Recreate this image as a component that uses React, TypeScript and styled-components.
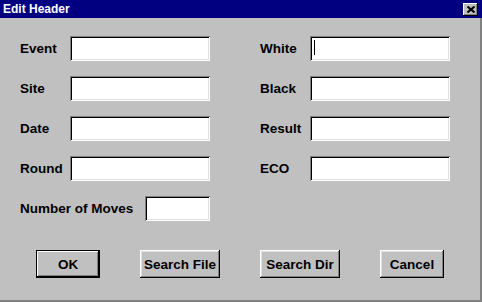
import React from "react";
import styled, { createGlobalStyle } from "styled-components";

const GlobalStyle = createGlobalStyle`
  html, body {
    margin: 0;
    padding: 0;
    background: #c0c0c0;
  }
`;

const Window = styled.div`
  width: 482px;
  height: 302px;
  display: flex;
  flex-direction: column;
  background: #c0c0c0;
  font-family: "Liberation Sans", Arial, sans-serif;
  font-weight: bold;
  color: #000;
  overflow: hidden;
`;

const TitleBar = styled.div`
  height: 18px;
  flex: none;
  display: flex;
  align-items: center;
  justify-content: space-between;
  background: #000080;
  padding: 0 4px 0 3px;
`;

const Title = styled.div`
  color: #fff;
  font-size: 12px;
  line-height: 18px;
`;

const CloseButton = styled.button`
  width: 15px;
  height: 13px;
  padding: 0;
  display: flex;
  align-items: center;
  justify-content: center;
  border: none;
  background: #c0c0c0;
  box-shadow: inset -1px -1px #000, inset 1px 1px #fff, inset -2px -2px #808080;
`;

const Body = styled.div`
  flex: 1;
  display: flex;
  flex-direction: column;
  padding: 18px 0 0 20px;
  border-right: 2px solid #808080;
  border-bottom: 2px solid #808080;
`;

const Fields = styled.div`
  display: grid;
  grid-template-columns: 190px 190px;
  column-gap: 50px;
  row-gap: 15px;
`;

const Field = styled.div<{ $labelWidth?: number; $inputWidth?: number }>`
  position: relative;
  display: grid;
  grid-template-columns: ${(p) => p.$labelWidth ?? 50}px ${(p) =>
      p.$inputWidth ? `${p.$inputWidth}px` : "1fr"};
  align-items: center;
`;

const Label = styled.label`
  font-size: 13.5px;
  white-space: nowrap;
`;

const TextBox = styled.input`
  height: 25px;
  box-sizing: border-box;
  width: 100%;
  border: none;
  outline: none;
  background: #fff;
  padding: 2px 4px;
  font: inherit;
  box-shadow: inset 1px 1px #808080, inset -1px -1px #fff, inset 2px 2px #000,
    inset -2px -2px #dfdfdf;
`;

const Caret = styled.span`
  position: absolute;
  left: 54px;
  top: 4px;
  width: 1px;
  height: 15px;
  background: #000;
`;

const ButtonRow = styled.div`
  display: flex;
  gap: 40px;
  margin: 29px 0 0 16px;
`;

const Button = styled.button<{ $width: number; $default?: boolean }>`
  width: ${(p) => p.$width}px;
  height: 28px;
  padding: 0;
  border: none;
  background: #c0c0c0;
  font-family: "Liberation Sans", Arial, sans-serif;
  font-weight: bold;
  font-size: 13.5px;
  color: #000;
  box-shadow: ${(p) =>
    p.$default
      ? "inset 0 0 0 1px #000, inset -2px -2px #000, inset 2px 2px #fff, inset -3px -3px #808080"
      : "inset -1px -1px #000, inset 1px 1px #fff, inset -2px -2px #808080, inset 2px 2px #dfdfdf"};
`;

// row by row: left column tag, right column tag
const rows = [
  ["Event", "White"],
  ["Site", "Black"],
  ["Date", "Result"],
  ["Round", "ECO"],
];

export default function App() {
  return (
    <>
      <GlobalStyle />
      <Window>
        <TitleBar>
          <Title>Edit Header</Title>
          <CloseButton aria-label="Close">
            <svg width="8" height="7" viewBox="0 0 8 7">
              <path d="M0.5 0.5 L7.5 6.5 M7.5 0.5 L0.5 6.5" stroke="#000" strokeWidth="2" />
            </svg>
          </CloseButton>
        </TitleBar>
        <Body>
          <Fields>
            {rows.map(([left, right], i) => (
              <React.Fragment key={left}>
                <Field>
                  <Label>{left}</Label>
                  <TextBox />
                </Field>
                <Field>
                  <Label>{right}</Label>
                  <TextBox />
                  {i === 0 && <Caret />}
                </Field>
              </React.Fragment>
            ))}
            <Field $labelWidth={125} $inputWidth={65}>
              <Label>Number of Moves</Label>
              <TextBox />
            </Field>
          </Fields>
          <ButtonRow>
            <Button $width={64} $default>OK</Button>
            <Button $width={80}>Search File</Button>
            <Button $width={80}>Search Dir</Button>
            <Button $width={64}>Cancel</Button>
          </ButtonRow>
        </Body>
      </Window>
    </>
  );
}
